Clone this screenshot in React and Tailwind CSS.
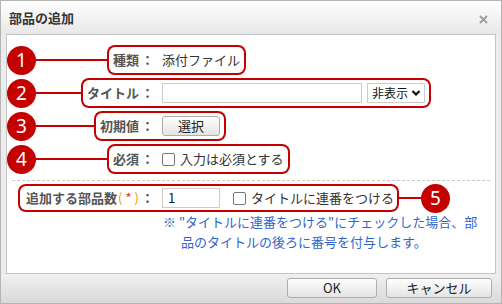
import React from "react";

const RED = "border-[#c40000]";

function Badge({ n }) {
  return (
    <div className="flex h-[29px] w-[29px] shrink-0 items-center justify-center rounded-full bg-[#c40000] font-['Noto_Sans',sans-serif] text-[19px] leading-none text-white">
      {n}
    </div>
  );
}

function Label({ children }) {
  return (
    <>
      <span className="font-bold text-[#555]">{children}</span>
      <span className="ml-[2px] font-bold text-[#555]">：</span>
    </>
  );
}

function Row({ n, label, children }) {
  return (
    <div className="flex h-[30px]">
      <div className="flex w-[147px] items-center">
        <Badge n={n} />
        <div className="h-[2px] flex-1 bg-[#c40000]" />
        <div className={`flex h-full items-center rounded-l-[8px] border-y-2 border-l-2 ${RED} pl-[4px]`}>
          <Label>{label}</Label>
        </div>
      </div>
      <div className={`flex items-center rounded-r-[8px] border-y-2 border-r-2 ${RED} pl-[8px] pr-[4px]`}>
        {children}
      </div>
    </div>
  );
}

function Check() {
  return <span className="inline-block h-[13px] w-[13px] shrink-0 rounded-[2px] border border-[#777] bg-white" />;
}

function Btn({ className, children }) {
  return (
    <div
      className={`flex h-[20px] items-center justify-center rounded-[3px] border border-[#adadad] bg-gradient-to-b from-white to-[#e4e4e4] text-[13px] text-[#222] ${className}`}
    >
      {children}
    </div>
  );
}

export default function App() {
  return (
    <div className="flex h-[304px] w-[502px] flex-col border border-[#b4b4b4] bg-[#ececec] font-['Noto_Sans_CJK_JP',sans-serif] text-[13px] text-[#333]">
      <div className="flex h-[33px] shrink-0 items-center justify-between bg-gradient-to-b from-white to-[#e8e8e8] pl-[8px] pr-[13px]">
        <span className="font-bold text-[#333]">部品の追加</span>
        <svg width="9" height="9" viewBox="0 0 9 9" className="mt-[4px]">
          <path d="M1 1L8 8M8 1L1 8" stroke="#a0a0a0" strokeWidth="2" />
        </svg>
      </div>

      <div className="mx-[5px] flex h-[240px] shrink-0 flex-col border border-[#c4c4c4] bg-white pt-[10px]">
        <div className="flex flex-col gap-[3px]">
          <Row n="1" label="種類">
            <span className="text-[#333]">添付ファイル</span>
          </Row>
          <Row n="2" label="タイトル">
            <div className="h-[20px] w-[200px] border border-[#ccc] bg-white" />
            <div className="ml-[5px] flex h-[20px] w-[58px] items-center justify-between border border-[#ccc] bg-white pl-[4px] pr-[3px] text-[12px] text-[#111]">
              <span>非表示</span>
              <svg width="10" height="8" viewBox="0 0 10 8">
                <path d="M1.5 2L5 5.5L8.5 2" fill="none" stroke="#111" strokeWidth="2.2" />
              </svg>
            </div>
          </Row>
          <Row n="3" label="初期値">
            <Btn className="w-[58px]">選択</Btn>
          </Row>
          <Row n="4" label="必須">
            <div className="flex items-center gap-[5px]">
              <Check />
              <span className="text-[#333]">入力は必須とする</span>
            </div>
          </Row>
        </div>

        <div className="mx-[5px] mt-[6px] border-t border-dashed border-[#c8c8c8]" />

        <div className="mt-[3px] flex h-[28px]">
          <div className="flex w-[147px] justify-end">
            <div className={`flex h-full items-center rounded-l-[8px] border-y-2 border-l-2 ${RED} pl-[6px]`}>
              <span className="font-bold text-[#555]">追加する部品数</span>
              <span className="ml-[1px] text-[#f39800]">(</span>
              <span className="mx-[3px] text-[#e8382b]">*</span>
              <span className="text-[#f39800]">)</span>
              <span className="ml-[2px] font-bold text-[#555]">：</span>
            </div>
          </div>
          <div className="flex items-center">
            <div className={`flex h-full items-center rounded-r-[8px] border-y-2 border-r-2 ${RED} pl-[8px] pr-[3px]`}>
              <div className="flex h-[20px] w-[58px] items-center border border-[#ccc] bg-white pl-[5px] text-[#0a1a3a]">1</div>
              <div className="ml-[13px] flex items-center gap-[5px]">
                <Check />
                <span className="text-[#333]">タイトルに連番をつける</span>
              </div>
            </div>
            <div className="h-[2px] w-[22px] bg-[#c40000]" />
            <Badge n="5" />
          </div>
        </div>

        <p className="pl-[174px] -indent-[18px] leading-[20px] text-[#3366cc]">
          ※ "タイトルに連番をつける"にチェックした場合、部
          <br />
          品のタイトルの後ろに番号を付与します。
        </p>
      </div>

      <div className="flex flex-1 justify-end gap-[9px] bg-gradient-to-b from-[#f0f0f0] to-[#dadada] pr-[9px] pt-[4px]">
        <Btn className="w-[90px]">OK</Btn>
        <Btn className="w-[106px]">キャンセル</Btn>
      </div>
    </div>
  );
}
